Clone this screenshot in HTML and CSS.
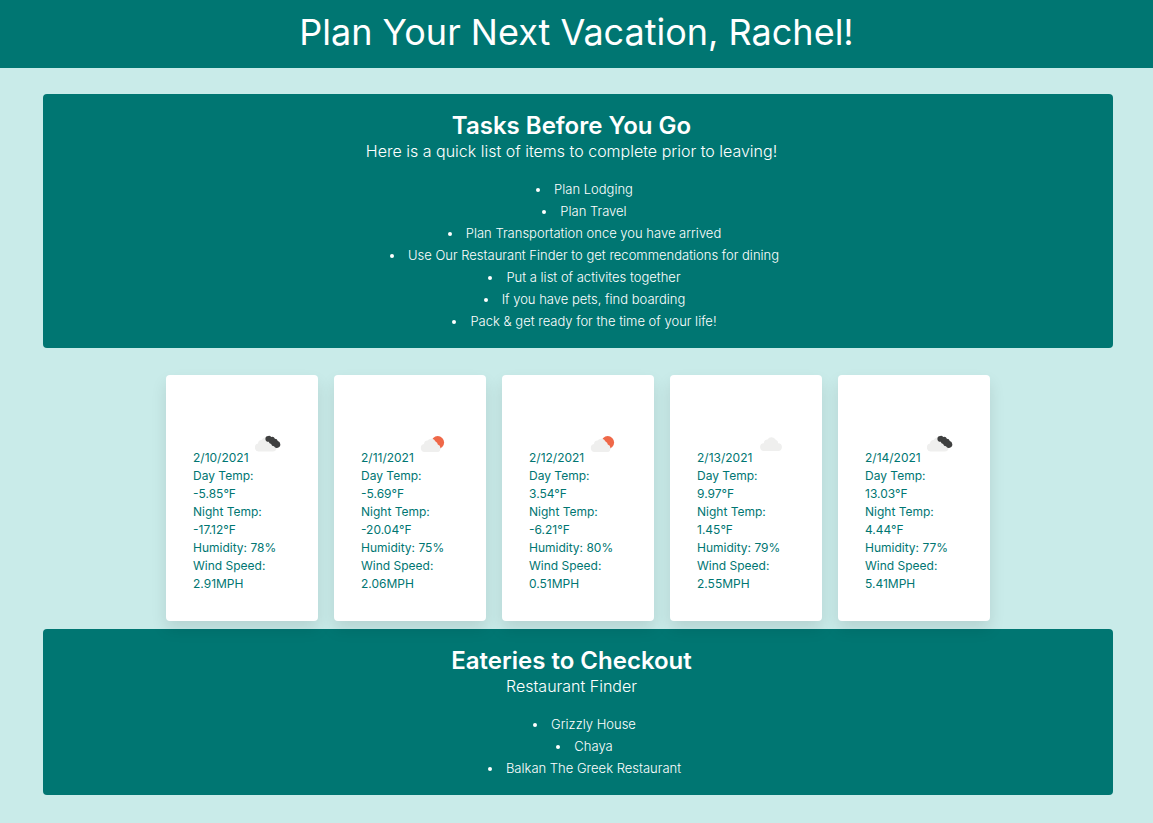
FILE: index.html
```html
<!DOCTYPE html>
<html lang="en">
<head>
<meta charset="utf-8">
<meta name="viewport" content="width=device-width, initial-scale=1">
<title>Plan Your Next Vacation</title>
<link rel="stylesheet" href="styles.css">
</head>
<body>
<svg class="sprite" aria-hidden="true">
  <symbol id="cloud" viewBox="-2 0 28 17">
    <path class="cloud" d="M4.200 16a3.900 3.900 0 0 1-.4-7.800 3.600 3.600 0 0 1 3.700-3.700 4.700 4.700 0 0 1 8.200.3 3.500 3.500 0 0 1 2.500 3.400 3.900 3.900 0 0 1-.4 7.800z"/>
  </symbol>
  <symbol id="broken" viewBox="1 0 28 17">
    <path class="cloud" d="M4.500 16.500a4 4 0 0 1-.5-7.900 3.700 3.700 0 0 1 3.500-3.500 5.400 5.400 0 0 1 9.500.2 4 4 0 0 1 2 3.200 4 4 0 0 1-.7 8z"/>
    <path class="dark" d="M11.400 4a3 3 0 0 1 2.900-3.100 3 3 0 0 1 2.900 1 3 3 0 0 1 3.700 1.800 3 3 0 0 1 2.900 2.300 3 3 0 0 1 2.400 2.700 3.100 3.100 0 0 1-2.500 4.100 3.100 3.100 0 0 1-3.700-1.600 3 3 0 0 1-2.900-2.200 3 3 0 0 1-2.400-2.200 2.800 2.800 0 0 1-3.300-2.800z"/>
  </symbol>
  <symbol id="sunny" viewBox="0 0 28 17">
    <circle class="sun" cx="17.700" cy="7.500" r="6.400"/>
    <path class="cloud" d="M4.500 17a4 4 0 0 1-.5-7.900 3.700 3.700 0 0 1 3.500-3.700 4.800 4.800 0 0 1 8 1.100 3.800 3.800 0 0 1 2.300 3.100 4 4 0 0 1 .5 7.400z"/>
  </symbol>
</svg>
<header class="banner"><h1 class="banner-title">Plan Your Next Vacation, Rachel!</h1></header>
<main class="page">
  <section class="panel">
    <h2 class="panel-title">Tasks Before You Go</h2>
    <p class="panel-subtitle">Here is a quick list of items to complete prior to leaving!</p>
    <ul class="list">
      <li>Plan Lodging</li>
      <li>Plan Travel</li>
      <li>Plan Transportation once you have arrived</li>
      <li>Use Our Restaurant Finder to get recommendations for dining</li>
      <li>Put a list of activites together</li>
      <li>If you have pets, find boarding</li>
      <li>Pack &amp; get ready for the time of your life!</li>
    </ul>
  </section>
  <section class="forecast" aria-label="Five day forecast">
    <article class="card">
      <div class="day">2/10/2021 <svg class="icon" role="img" aria-label="Broken clouds"><use href="#broken"/></svg></div>
      <p>Day Temp: <br>-5.85°F</p><p>Night Temp: <br>-17.12°F</p><p>Humidity: 78%</p><p>Wind Speed: <br>2.91MPH</p>
    </article>
    <article class="card">
      <div class="day">2/11/2021 <svg class="icon" role="img" aria-label="Partly cloudy"><use href="#sunny"/></svg></div>
      <p>Day Temp: <br>-5.69°F</p><p>Night Temp: <br>-20.04°F</p><p>Humidity: 75%</p><p>Wind Speed: <br>2.06MPH</p>
    </article>
    <article class="card">
      <div class="day">2/12/2021 <svg class="icon" role="img" aria-label="Partly cloudy"><use href="#sunny"/></svg></div>
      <p>Day Temp: <br>3.54°F</p><p>Night Temp: <br>-6.21°F</p><p>Humidity: 80%</p><p>Wind Speed: <br>0.51MPH</p>
    </article>
    <article class="card">
      <div class="day">2/13/2021 <svg class="icon" role="img" aria-label="Cloudy"><use href="#cloud"/></svg></div>
      <p>Day Temp: <br>9.97°F</p><p>Night Temp: <br>1.45°F</p><p>Humidity: 79%</p><p>Wind Speed: <br>2.55MPH</p>
    </article>
    <article class="card">
      <div class="day">2/14/2021 <svg class="icon" role="img" aria-label="Broken clouds"><use href="#broken"/></svg></div>
      <p>Day Temp: <br>13.03°F</p><p>Night Temp: <br>4.44°F</p><p>Humidity: 77%</p><p>Wind Speed: <br>5.41MPH</p>
    </article>
  </section>
  <section class="panel">
    <h2 class="panel-title">Eateries to Checkout</h2>
    <p class="panel-subtitle">Restaurant Finder</p>
    <ul class="list">
      <li>Grizzly House</li>
      <li>Chaya</li>
      <li>Balkan The Greek Restaurant</li>
    </ul>
  </section>
</main>
</body>
</html>
```

FILE: styles.css
```css
* { box-sizing: border-box; }

body {
  margin: 0;
  background: #c9ebe9;
  color: #fff;
  font-family: Inter, "Liberation Sans", sans-serif;
}

h1, h2, p, ul { margin: 0; padding: 0; }

.sprite { display: block; width: 0; height: 0; }

.banner {
  padding: 8px 16px 12px;
  background: #007672;
  text-align: center;
}

.banner-title {
  font-size: 36px;
  font-weight: 400;
  line-height: 48px;
}

.page { padding: 26px 40px 28px 43px; }

.panel {
  padding: 18px 29px 15px 16px;
  border-radius: 4px;
  background: #007672;
  text-align: center;
}

.panel-title {
  font-size: 24px;
  font-weight: 600;
  line-height: 28px;
}

.panel-subtitle {
  margin-bottom: 15px;
  font-size: 16px;
  font-weight: 300;
  line-height: 23px;
}

.list {
  padding: 0 0 1px 26px;
  list-style-position: inside;
  font-size: 13px;
  font-weight: 300;
  line-height: 22px;
}

.forecast {
  display: flex;
  flex-wrap: wrap;
  justify-content: center;
  gap: 16px;
  padding: 27px 0 8px;
}

.card {
  width: 152px;
  padding: 55px 27px 28px;
  border-radius: 4px;
  background: #fff;
  box-shadow: 0 8px 16px rgba(0, 0, 0, 0.1);
  color: #007672;
  font-size: 12px;
  line-height: 18px;
}

.day {
  display: flex;
  align-items: flex-end;
  gap: 6px;
  height: 37px;
  white-space: nowrap;
}

.icon {
  flex: none;
  width: 28px;
  height: 17px;
  margin-bottom: 15px;
}

.cloud { fill: #efefee; }
.dark { fill: #3f4040; }
.sun { fill: #ef6848; }
```
